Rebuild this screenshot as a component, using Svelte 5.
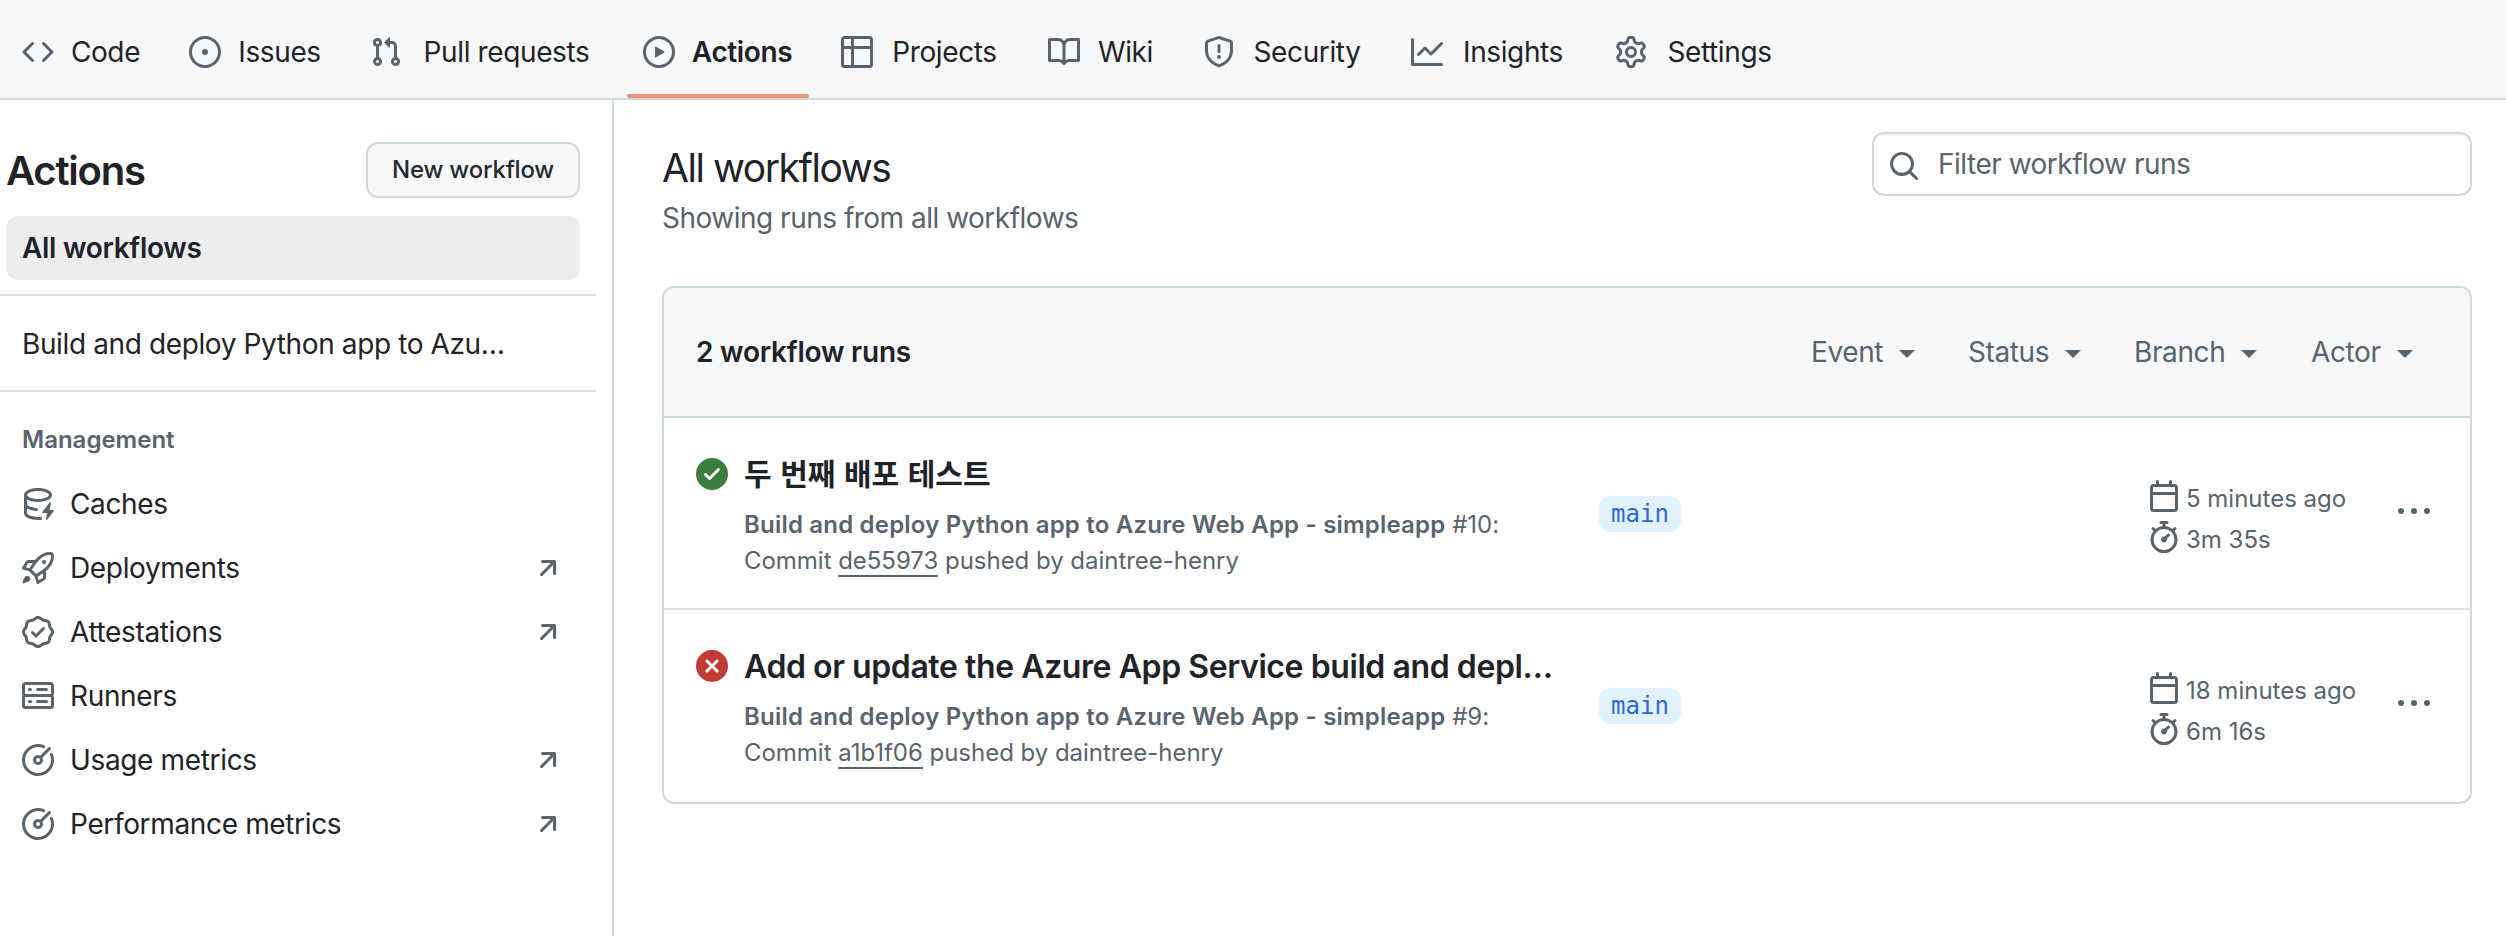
<script>
  const icons = {
    code: 'm11.28 3.22 4.25 4.25a.75.75 0 0 1 0 1.06l-4.25 4.25a.749.749 0 0 1-1.275-.326.749.749 0 0 1 .215-.734L13.94 8l-3.72-3.72a.749.749 0 0 1 .326-1.275.749.749 0 0 1 .734.215Zm-6.56 0a.751.751 0 0 1 1.042.018.751.751 0 0 1 .018 1.042L2.06 8l3.72 3.72a.749.749 0 0 1-.326 1.275.749.749 0 0 1-.734-.215L.47 8.53a.75.75 0 0 1 0-1.06Z',
    issue: 'M8 9.5a1.5 1.5 0 1 0 0-3 1.5 1.5 0 0 0 0 3ZM8 0a8 8 0 1 1 0 16A8 8 0 0 1 8 0ZM1.5 8a6.5 6.5 0 1 0 13 0 6.5 6.5 0 0 0-13 0Z',
    pull: 'M1.5 3.25a2.25 2.25 0 1 1 3 2.122v5.256a2.251 2.251 0 1 1-1.5 0V5.372A2.25 2.25 0 0 1 1.5 3.25Zm5.677-.177L9.573.677A.25.25 0 0 1 10 .854V2.5h1A2.5 2.5 0 0 1 13.5 5v5.628a2.251 2.251 0 1 1-1.5 0V5a1 1 0 0 0-1-1h-1v1.646a.25.25 0 0 1-.427.177L7.177 3.427a.25.25 0 0 1 0-.354ZM3.75 2.5a.75.75 0 1 0 0 1.5.75.75 0 0 0 0-1.5Zm0 9.5a.75.75 0 1 0 0 1.5.75.75 0 0 0 0-1.5Zm8.25.75a.75.75 0 1 0 1.5 0 .75.75 0 0 0-1.5 0Z',
    play: 'M8 0a8 8 0 1 1 0 16A8 8 0 0 1 8 0ZM1.5 8a6.5 6.5 0 1 0 13 0 6.5 6.5 0 0 0-13 0Zm4.879-2.773 4.264 2.559a.25.25 0 0 1 0 .428l-4.264 2.559A.25.25 0 0 1 6 10.559V5.442a.25.25 0 0 1 .379-.215Z',
    table: 'M0 1.75C0 .784.784 0 1.75 0h12.5C15.216 0 16 .784 16 1.75v12.5A1.75 1.75 0 0 1 14.25 16H1.75A1.75 1.75 0 0 1 0 14.25ZM6.5 6.5v8h7.75a.25.25 0 0 0 .25-.25V6.5Zm8-1.5V1.75a.25.25 0 0 0-.25-.25H6.5V5Zm-13 1.5v7.75c0 .138.112.25.25.25H5v-8ZM5 5V1.5H1.75a.25.25 0 0 0-.25.25V5Z',
    book: 'M0 1.75A.75.75 0 0 1 .75 1h4.253c1.227 0 2.317.59 3 1.501A3.743 3.743 0 0 1 11.006 1h4.245a.75.75 0 0 1 .75.75v10.5a.75.75 0 0 1-.75.75h-4.507a2.25 2.25 0 0 0-1.591.659l-.622.621a.75.75 0 0 1-1.06 0l-.622-.621A2.25 2.25 0 0 0 5.258 13H.75a.75.75 0 0 1-.75-.75Zm7.251 10.324.004-5.073-.002-2.253A2.25 2.25 0 0 0 5.003 2.5H1.5v9h3.757a3.75 3.75 0 0 1 1.994.574ZM8.755 4.75l-.004 7.322a3.752 3.752 0 0 1 1.992-.572H14.5v-9h-3.495a2.25 2.25 0 0 0-2.25 2.25Z',
    shield: 'M7.467.133a1.748 1.748 0 0 1 1.066 0l5.25 1.68A1.75 1.75 0 0 1 15 3.48V7c0 1.566-.32 3.182-1.303 4.682-.983 1.498-2.585 2.813-5.032 3.855a1.697 1.697 0 0 1-1.33 0c-2.447-1.042-4.049-2.357-5.032-3.855C1.32 10.182 1 8.566 1 7V3.48a1.75 1.75 0 0 1 1.217-1.667Zm.61 1.429a.25.25 0 0 0-.153 0l-5.25 1.68a.25.25 0 0 0-.174.238V7c0 1.358.275 2.666 1.057 3.86.784 1.194 2.121 2.34 4.366 3.297a.196.196 0 0 0 .154 0c2.245-.956 3.582-2.104 4.366-3.298C13.225 9.666 13.5 8.36 13.5 7V3.48a.251.251 0 0 0-.174-.237l-5.25-1.68ZM8.75 4.75v3a.75.75 0 0 1-1.5 0v-3a.75.75 0 0 1 1.5 0ZM9 10.5a1 1 0 1 1-2 0 1 1 0 0 1 2 0Z',
    graph: 'M1.5 1.75V13.5h13.75a.75.75 0 0 1 0 1.5H.75a.75.75 0 0 1-.75-.75V1.75a.75.75 0 0 1 1.5 0Zm14.28 2.53-5.25 5.25a.75.75 0 0 1-1.06 0L7 7.06 4.28 9.78a.751.751 0 0 1-1.042-.018.751.751 0 0 1-.018-1.042l3.25-3.25a.75.75 0 0 1 1.06 0L10 7.94l4.72-4.72a.751.751 0 0 1 1.042.018.751.751 0 0 1 .018 1.042Z',
    gear: 'M8 0a8.2 8.2 0 0 1 .701.031C9.444.095 9.99.645 10.16 1.29l.288 1.107c.018.066.079.158.212.224.231.114.454.243.668.386.123.082.233.09.299.071l1.103-.303c.644-.176 1.392.021 1.82.63.27.385.506.792.704 1.218.315.675.111 1.422-.364 1.891l-.814.806c-.049.048-.098.147-.088.294.016.257.016.515 0 .772-.01.147.038.246.088.294l.814.806c.475.469.679 1.216.364 1.891a7.977 7.977 0 0 1-.704 1.217c-.428.61-1.176.807-1.82.63l-1.102-.302c-.067-.019-.177-.011-.3.071a5.909 5.909 0 0 1-.668.386c-.133.066-.194.158-.211.224l-.29 1.106c-.168.646-.715 1.196-1.458 1.26a8.006 8.006 0 0 1-1.402 0c-.743-.064-1.289-.614-1.458-1.26l-.289-1.106c-.018-.066-.079-.158-.212-.224a5.738 5.738 0 0 1-.668-.386c-.123-.082-.233-.09-.299-.071l-1.103.303c-.644.176-1.392-.021-1.82-.63a8.12 8.12 0 0 1-.704-1.218c-.315-.675-.111-1.422.363-1.891l.815-.806c.05-.048.098-.147.088-.294a6.214 6.214 0 0 1 0-.772c.01-.147-.038-.246-.088-.294l-.815-.806C.635 6.045.431 5.298.746 4.623a7.92 7.92 0 0 1 .704-1.217c.428-.61 1.176-.807 1.82-.63l1.102.302c.067.019.177.011.3-.071.214-.143.437-.272.668-.386.133-.066.194-.158.211-.224l.29-1.106C6.009.645 6.556.095 7.299.03 7.53.01 7.764 0 8 0Zm-.571 1.525c-.036.003-.108.036-.137.146l-.289 1.105c-.147.561-.549.967-.998 1.189-.173.086-.34.183-.5.29-.417.278-.97.423-1.529.27l-1.103-.303c-.109-.03-.175.016-.195.045-.22.312-.412.644-.573.99-.014.031-.021.11.059.19l.815.806c.411.406.562.957.53 1.456a4.709 4.709 0 0 0 0 .582c.032.499-.119 1.05-.53 1.456l-.815.806c-.081.08-.073.159-.059.19.162.346.353.677.573.989.02.03.085.076.195.046l1.102-.303c.56-.153 1.113-.008 1.53.27.161.107.328.204.501.29.447.222.85.629.997 1.189l.289 1.105c.029.109.101.143.137.146a6.6 6.6 0 0 0 1.142 0c.036-.003.108-.036.137-.146l.289-1.105c.147-.561.549-.967.998-1.189.173-.086.34-.183.5-.29.417-.278.97-.423 1.529-.27l1.103.303c.109.029.175-.016.195-.045.22-.313.411-.644.573-.99.014-.031.021-.11-.059-.19l-.815-.806c-.411-.406-.562-.957-.53-1.456a4.709 4.709 0 0 0 0-.582c-.032-.499.119-1.05.53-1.456l.815-.806c.081-.08.073-.159.059-.19a6.464 6.464 0 0 0-.573-.989c-.02-.03-.085-.076-.195-.046l-1.102.303c-.56.153-1.113.008-1.53-.27a4.44 4.44 0 0 0-.501-.29c-.447-.222-.85-.629-.997-1.189l-.289-1.105c-.029-.11-.101-.143-.137-.146a6.6 6.6 0 0 0-1.142 0ZM11 8a3 3 0 1 1-6 0 3 3 0 0 1 6 0ZM9.5 8a1.5 1.5 0 1 0-3.001.001A1.5 1.5 0 0 0 9.5 8Z',
    cache: 'M2.5 5.724V8c0 .248.238.7 1.169 1.159.874.43 2.144.745 3.62.822a.75.75 0 1 1-.078 1.498c-1.622-.085-3.102-.432-4.204-.975a5.565 5.565 0 0 1-.507-.28V12.5c0 .133.058.318.282.551.227.237.591.483 1.101.707 1.015.447 2.47.742 4.117.742.406 0 .802-.018 1.183-.052a.751.751 0 1 1 .134 1.494C8.89 15.98 8.45 16 8 16c-1.805 0-3.475-.32-4.721-.869-.623-.274-1.173-.619-1.579-1.041-.408-.425-.7-.964-.7-1.59v-9c0-.626.292-1.165.7-1.591.406-.42.956-.766 1.579-1.04C4.525.32 6.195 0 8 0c1.806 0 3.476.32 4.721.869.623.274 1.173.619 1.579 1.041.408.425.7.964.7 1.59 0 .626-.292 1.165-.7 1.591-.406.42-.956.766-1.578 1.04C11.475 6.68 9.805 7 8 7c-1.805 0-3.475-.32-4.721-.869a6.15 6.15 0 0 1-.779-.407Zm0-2.224c0 .133.058.318.282.551.227.237.591.483 1.101.707C4.898 5.205 6.353 5.5 8 5.5c1.646 0 3.101-.295 4.118-.742.508-.224.873-.471 1.1-.708.224-.232.282-.417.282-.55 0-.133-.058-.318-.282-.551-.227-.237-.591-.483-1.101-.707C11.102 1.795 9.647 1.5 8 1.5c-1.646 0-3.101.295-4.118.742-.508.224-.873.471-1.1.708-.224.232-.282.417-.282.55ZM14.49 7.582a.375.375 0 0 0-.66-.313l-3.625 4.625a.375.375 0 0 0 .295.606h2.127l-.619 2.922a.375.375 0 0 0 .666.304l3.125-4.125A.375.375 0 0 0 15.5 11h-1.778l.769-3.418Z',
    rocket: 'M14.064 0h.186C15.216 0 16 .784 16 1.75v.186a8.752 8.752 0 0 1-2.564 6.186l-.458.459c-.314.314-.641.616-.979.904v3.207c0 .608-.315 1.172-.833 1.49l-2.774 1.707a.749.749 0 0 1-1.11-.418l-.954-3.102a1.214 1.214 0 0 1-.145-.125L3.754 9.816a1.218 1.218 0 0 1-.124-.145L.528 8.717a.749.749 0 0 1-.418-1.11l1.71-2.774A1.748 1.748 0 0 1 3.31 4h3.204c.288-.338.59-.665.904-.979l.459-.458A8.749 8.749 0 0 1 14.064 0ZM8.938 3.623h-.002l-.458.458c-.76.76-1.437 1.598-2.02 2.5l-1.5 2.317 2.143 2.143 2.317-1.5c.902-.583 1.74-1.26 2.499-2.02l.459-.458a7.25 7.25 0 0 0 2.123-5.127V1.75a.25.25 0 0 0-.25-.25h-.186a7.249 7.249 0 0 0-5.125 2.123ZM3.56 14.56c-.732.732-2.334 1.045-3.005 1.148a.234.234 0 0 1-.201-.064.234.234 0 0 1-.064-.201c.103-.671.416-2.273 1.15-3.003a1.502 1.502 0 1 1 2.12 2.12Zm6.94-3.935c-.088.06-.177.118-.266.175l-2.35 1.521.548 1.783 1.949-1.2a.25.25 0 0 0 .119-.213ZM3.678 8.116 5.2 5.766c.058-.09.117-.178.176-.266H3.309a.25.25 0 0 0-.213.119l-1.2 1.95ZM12 5a1 1 0 1 1-2 0 1 1 0 0 1 2 0Z',
    verified: 'm9.585.52.929.68c.153.112.331.186.518.215l1.138.175a2.678 2.678 0 0 1 2.24 2.24l.174 1.139c.029.187.103.365.215.518l.68.928a2.677 2.677 0 0 1 0 3.17l-.68.928a1.174 1.174 0 0 0-.215.518l-.175 1.138a2.678 2.678 0 0 1-2.241 2.241l-1.138.175a1.17 1.17 0 0 0-.518.215l-.928.68a2.677 2.677 0 0 1-3.17 0l-.928-.68a1.174 1.174 0 0 0-.518-.215L3.83 14.41a2.678 2.678 0 0 1-2.24-2.24l-.175-1.138a1.17 1.17 0 0 0-.215-.518l-.68-.928a2.677 2.677 0 0 1 0-3.17l.68-.928c.112-.153.186-.331.215-.518l.175-1.14a2.678 2.678 0 0 1 2.24-2.24l1.139-.175c.187-.029.365-.103.518-.215l.928-.68a2.677 2.677 0 0 1 3.17 0ZM7.303 1.728l-.927.68a2.67 2.67 0 0 1-1.18.489l-1.137.174a1.179 1.179 0 0 0-.987.987l-.174 1.136a2.677 2.677 0 0 1-.489 1.18l-.68.928a1.18 1.18 0 0 0 0 1.394l.68.927c.256.348.424.753.489 1.18l.174 1.137c.078.509.478.909.987.987l1.136.174a2.67 2.67 0 0 1 1.18.489l.928.68c.414.305.979.305 1.394 0l.927-.68a2.67 2.67 0 0 1 1.18-.489l1.137-.174a1.18 1.18 0 0 0 .987-.987l.174-1.136a2.67 2.67 0 0 1 .489-1.18l.68-.928a1.176 1.176 0 0 0 0-1.394l-.68-.927a2.686 2.686 0 0 1-.489-1.18l-.174-1.137a1.179 1.179 0 0 0-.987-.987l-1.136-.174a2.677 2.677 0 0 1-1.18-.489l-.928-.68a1.176 1.176 0 0 0-1.394 0ZM11.28 6.78l-3.75 3.75a.75.75 0 0 1-1.06 0L4.72 8.78a.751.751 0 0 1 .018-1.042.751.751 0 0 1 1.042-.018L7 8.94l3.22-3.22a.751.751 0 0 1 1.042.018.751.751 0 0 1 .018 1.042Z',
    server: 'M1.75 1h12.5c.966 0 1.75.784 1.75 1.75v4c0 .372-.116.717-.314 1 .198.283.314.628.314 1v4a1.75 1.75 0 0 1-1.75 1.75H1.75A1.75 1.75 0 0 1 0 12.75v-4c0-.358.109-.707.314-1a1.739 1.739 0 0 1-.314-1v-4C0 1.784.784 1 1.75 1ZM1.5 2.75v4c0 .138.112.25.25.25h12.5a.25.25 0 0 0 .25-.25v-4a.25.25 0 0 0-.25-.25H1.75a.25.25 0 0 0-.25.25Zm.25 5.75a.25.25 0 0 0-.25.25v4c0 .138.112.25.25.25h12.5a.25.25 0 0 0 .25-.25v-4a.25.25 0 0 0-.25-.25ZM7 4.75A.75.75 0 0 1 7.75 4h4.5a.75.75 0 0 1 0 1.5h-4.5A.75.75 0 0 1 7 4.75ZM7.75 10h4.5a.75.75 0 0 1 0 1.5h-4.5a.75.75 0 0 1 0-1.5ZM3 4.75A.75.75 0 0 1 3.75 4h.5a.75.75 0 0 1 0 1.5h-.5A.75.75 0 0 1 3 4.75ZM3.75 10h.5a.75.75 0 0 1 0 1.5h-.5a.75.75 0 0 1 0-1.5Z',
    meter: 'M8 1.5a6.5 6.5 0 1 0 6.016 4.035.75.75 0 0 1 1.388-.57 8 8 0 1 1-4.37-4.37.75.75 0 0 1-.569 1.389A6.473 6.473 0 0 0 8 1.5Zm6.28.22a.75.75 0 0 1 0 1.06l-4.063 4.064a2.5 2.5 0 1 1-1.06-1.06L13.22 1.72a.75.75 0 0 1 1.06 0ZM7 8a1 1 0 1 0 2 0 1 1 0 0 0-2 0Z',
    arrow: 'M4.53 4.75A.75.75 0 0 1 5.28 4h6.01a.75.75 0 0 1 .75.75v6.01a.75.75 0 0 1-1.5 0v-4.2l-5.26 5.26a.749.749 0 0 1-1.275-.326.749.749 0 0 1 .215-.734L9.48 5.5h-4.2a.75.75 0 0 1-.75-.75Z',
    search: 'M10.68 11.74a6 6 0 0 1-7.922-8.982 6 6 0 0 1 8.982 7.922l3.04 3.04a.749.749 0 0 1-.326 1.275.749.749 0 0 1-.734-.215ZM11.5 7a4.499 4.499 0 1 0-8.997 0A4.499 4.499 0 0 0 11.5 7Z',
    success: 'M8 16A8 8 0 1 1 8 0a8 8 0 0 1 0 16Zm3.78-9.72a.751.751 0 0 0-.018-1.042.751.751 0 0 0-1.042-.018L6.75 9.19 5.28 7.72a.751.751 0 0 0-1.042.018.751.751 0 0 0-.018 1.042l2 2a.75.75 0 0 0 1.06 0Z',
    failure: 'M2.343 13.657A8 8 0 1 1 13.658 2.343 8 8 0 0 1 2.343 13.657ZM6.03 4.97a.751.751 0 0 0-1.042.018.751.751 0 0 0-.018 1.042L6.94 8 4.97 9.97a.749.749 0 0 0 .326 1.275.749.749 0 0 0 .734-.215L8 9.06l1.97 1.97a.749.749 0 0 0 1.275-.326.749.749 0 0 0-.215-.734L9.06 8l1.97-1.97a.749.749 0 0 0-.326-1.275.749.749 0 0 0-.734.215L8 6.94Z',
    calendar: 'M4.75 0a.75.75 0 0 1 .75.75V2h5V.75a.75.75 0 0 1 1.5 0V2h1.25c.966 0 1.75.784 1.75 1.75v10.5A1.75 1.75 0 0 1 13.25 16H2.75A1.75 1.75 0 0 1 1 14.25V3.75C1 2.784 1.784 2 2.75 2H4V.75A.75.75 0 0 1 4.75 0ZM2.5 7.5v6.75c0 .138.112.25.25.25h10.5a.25.25 0 0 0 .25-.25V7.5Zm10.75-4H2.75a.25.25 0 0 0-.25.25V6h11V3.75a.25.25 0 0 0-.25-.25Z',
    stopwatch: 'M5.75.75A.75.75 0 0 1 6.5 0h3a.75.75 0 0 1 0 1.5h-.75v1l-.001.041a6.724 6.724 0 0 1 3.464 1.435l.007-.006.75-.75a.749.749 0 0 1 1.275.326.749.749 0 0 1-.215.734l-.75.75-.006.007a6.75 6.75 0 1 1-10.548 0L2.72 5.03l-.75-.75a.751.751 0 0 1 .018-1.042.751.751 0 0 1 1.042-.018l.75.75.007.006A6.72 6.72 0 0 1 7.25 2.541V1.5H6.5a.75.75 0 0 1-.75-.75ZM8 14.5a5.25 5.25 0 1 0-.001-10.501A5.25 5.25 0 0 0 8 14.5Zm.389-6.7 1.33-1.33a.75.75 0 1 1 1.061 1.06L9.45 8.861A1.503 1.503 0 0 1 8 10.75a1.499 1.499 0 1 1 .389-2.95Z',
    kebab: 'M8 9.5a1.5 1.5 0 1 0 0-3 1.5 1.5 0 0 0 0 3ZM1.5 9.5a1.5 1.5 0 1 0 0-3 1.5 1.5 0 0 0 0 3Zm13 0a1.5 1.5 0 1 0 0-3 1.5 1.5 0 0 0 0 3Z'
  };

  const tabs = [
    { icon: 'code', label: 'Code' },
    { icon: 'issue', label: 'Issues' },
    { icon: 'pull', label: 'Pull requests' },
    { icon: 'play', label: 'Actions', active: true },
    { icon: 'table', label: 'Projects' },
    { icon: 'book', label: 'Wiki' },
    { icon: 'shield', label: 'Security' },
    { icon: 'graph', label: 'Insights' },
    { icon: 'gear', label: 'Settings' }
  ];

  const management = [
    { icon: 'cache', label: 'Caches' },
    { icon: 'rocket', label: 'Deployments', out: true },
    { icon: 'verified', label: 'Attestations', out: true },
    { icon: 'server', label: 'Runners' },
    { icon: 'meter', label: 'Usage metrics', out: true },
    { icon: 'meter', label: 'Performance metrics', out: true }
  ];

  const filters = ['Event', 'Status', 'Branch', 'Actor'];

  const runs = [
    { status: 'success', title: '두 번째 배포 테스트', korean: true, number: 10, sha: 'de55973', when: '5 minutes ago', took: '3m 35s' },
    { status: 'failure', title: 'Add or update the Azure App Service build and depl…', number: 9, sha: 'a1b1f06', when: '18 minutes ago', took: '6m 16s' }
  ];
</script>

{#snippet icon(name)}
  <svg class="icon {name}" viewBox="0 0 16 16" aria-hidden="true"><path d={icons[name]} /></svg>
{/snippet}

<div class="page">
  <header>
    <nav class="tabs">
      {#each tabs as tab}
        <a class="tab" class:active={tab.active}>{@render icon(tab.icon)}<span>{tab.label}</span></a>
      {/each}
    </nav>
  </header>

  <div class="body">
    <aside>
      <div class="side-head">
        <h1>Actions</h1>
        <button>New workflow</button>
      </div>
      <a class="selected">All workflows</a>
      <div class="workflow"><a>Build and deploy Python app to Azu…</a></div>
      <h3>Management</h3>
      <ul>
        {#each management as item}
          <li>
            {@render icon(item.icon)}<span>{item.label}</span>
            {#if item.out}{@render icon('arrow')}{/if}
          </li>
        {/each}
      </ul>
    </aside>

    <main>
      <div class="main-head">
        <div class="heading">
          <h2>All workflows</h2>
          <p>Showing runs from all workflows</p>
        </div>
        <div class="search-box">{@render icon('search')}<span>Filter workflow runs</span></div>
      </div>

      <section class="box">
        <div class="box-head">
          <strong>2 workflow runs</strong>
          <div class="filters">
            {#each filters as filter}
              <div class="filter"><span>{filter}</span><i></i></div>
            {/each}
          </div>
        </div>
        {#each runs as run}
          <article>
            <div class="status">{@render icon(run.status)}</div>
            <div class="info">
              <div class="title" class:korean={run.korean}>{run.title}</div>
              <div class="sub"><b>Build and deploy Python app to Azure Web App - simpleapp</b> #{run.number}:</div>
              <div class="sub commit">Commit <u>{run.sha}</u> pushed by daintree-henry</div>
            </div>
            <div class="branch"><code>main</code></div>
            <div class="meta">
              <div>{@render icon('calendar')}<span>{run.when}</span></div>
              <div>{@render icon('stopwatch')}<span>{run.took}</span></div>
            </div>
            <div class="more">{@render icon('kebab')}</div>
          </article>
        {/each}
      </section>
    </main>
  </div>
</div>

<style>
  :global(body) { background: #fff; }
  * { box-sizing: border-box; margin: 0; padding: 0; }
  .page {
    height: 936px;
    overflow: hidden;
    display: flex;
    flex-direction: column;
    font-family: Inter, 'Noto Sans CJK KR', sans-serif;
    font-size: 28px;
    line-height: 40px;
    letter-spacing: -0.38px;
    color: #1f2328;
    white-space: nowrap;
  }
  .icon { width: 32px; height: 32px; flex: none; display: block; fill: #59636e; }

  header { height: 100px; padding: 6px 0 0 6px; background: #f6f8fa; border-bottom: 2px solid #d1d9e0; }
  .tabs { display: grid; height: 92px; grid-template-columns: 167px 181px 273px 198px 207px 155px 208px 204px 209px; }
  .tab { display: flex; align-items: center; gap: 16px; padding: 0 32px 0 16px; position: relative; }
  .tab span { flex: 1; display: flex; justify-content: center; }
  .tab.active { font-weight: 600; }
  .tab.active::after {
    content: '';
    position: absolute;
    left: 0;
    right: 16px;
    bottom: 0;
    height: 4px;
    border-radius: 2px;
    background: #ee9278;
  }

  .body { flex: 1; display: grid; grid-template-columns: 614px 1fr; }
  aside { border-right: 2px solid #d1d9e0; padding-top: 42px; }
  .side-head { display: flex; justify-content: space-between; align-items: center; height: 56px; padding: 0 32px 0 6px; }
  h1 { padding-top: 2px; font-size: 40px; font-weight: 600; letter-spacing: -1.2px; }
  button {
    width: 214px;
    height: 56px;
    border: 2px solid #d1d9e0;
    border-radius: 12px;
    background: #f6f8fa;
    color: #25292e;
    font: 500 24px/40px Inter, sans-serif;
    letter-spacing: -0.2px;
  }
  .selected {
    display: flex;
    align-items: center;
    height: 64px;
    margin: 18px 32px 14px 6px;
    padding-left: 16px;
    border-radius: 12px;
    background: #ecedef;
    font-weight: 600;
    letter-spacing: -0.3px;
  }
  .workflow {
    display: flex;
    align-items: center;
    width: 596px;
    height: 98px;
    padding: 2px 0 0 22px;
    border-top: 2px solid #dfe4e9;
    border-bottom: 2px solid #dfe4e9;
  }
  h3 { padding: 28px 22px 12px; font-size: 24px; font-weight: 600; letter-spacing: 0; color: #59636e; }
  ul { list-style: none; }
  li { display: flex; align-items: center; gap: 16px; height: 64px; padding: 0 48px 0 22px; letter-spacing: -0.35px; }
  li .arrow { margin-left: auto; }

  main { padding: 32px 34px 0 48px; }
  .main-head { display: flex; justify-content: space-between; height: 154px; }
  .heading { padding-top: 6px; }
  h2 { font-size: 39px; line-height: 60px; font-weight: 400; letter-spacing: -1.45px; }
  p { color: #59636e; letter-spacing: -0.5px; }
  .search-box {
    display: flex;
    align-items: center;
    gap: 18px;
    width: 600px;
    height: 64px;
    padding: 0 14px;
    border: 2px solid #d1d9e0;
    border-radius: 12px;
    box-shadow: inset 0 2px 0 #f6f8fa;
    color: #59636e;
    letter-spacing: -0.5px;
  }
  .search-box .icon { margin-top: 4px; }

  .box { border: 2px solid #d1d9e0; border-radius: 12px; overflow: hidden; }
  .box-head {
    display: flex;
    justify-content: space-between;
    align-items: center;
    height: 130px;
    padding-left: 32px;
    background: #f6f8fa;
    border-bottom: 2px solid #d1d9e0;
  }
  strong { font-weight: 600; letter-spacing: -0.22px; }
  .filters { display: grid; grid-template-columns: 157px 166px 177px 159px; color: #59636e; }
  .filter { display: flex; align-items: center; gap: 16px; }
  .filter i { margin-top: 4px; border: solid transparent; border-width: 8px 8px 0; border-top-color: #59636e; }

  article {
    display: grid;
    grid-template-columns: 48px 855px 549px 250px 1fr;
    height: 192px;
    padding-left: 32px;
    border-bottom: 2px solid #dfe4e9;
  }
  article:last-child { border-bottom: 0; }
  .status { padding-top: 40px; }
  .success { fill: #3a7e3e; }
  .failure { fill: #c23a35; }
  .info { padding-top: 33px; }
  .title { height: 48px; margin-bottom: 8px; font-size: 32px; line-height: 48px; font-weight: 600; letter-spacing: -0.42px; }
  .title.korean { font-size: 30px; letter-spacing: 0; word-spacing: 1px; line-height: 46px; }
  .sub { font-size: 24px; line-height: 36px; letter-spacing: -0.03px; color: #59636e; }
  .sub b { font-weight: 600; letter-spacing: 0.2px; }
  u { text-decoration: none; border-bottom: 2px solid #59636e; }
  .branch { padding-top: 78px; }
  code {
    display: block;
    width: 82px;
    height: 36px;
    border-radius: 12px;
    background: #e1f2fd;
    color: #2f66d6;
    font: 24px/36px 'DejaVu Sans Mono', monospace;
    letter-spacing: 0;
    text-align: center;
  }
  .meta { padding-top: 62px; font-size: 24px; line-height: 37px; letter-spacing: 0; color: #59636e; }
  .meta div { display: flex; gap: 6px; height: 41px; }
  .more { padding-top: 77px; }
</style>
